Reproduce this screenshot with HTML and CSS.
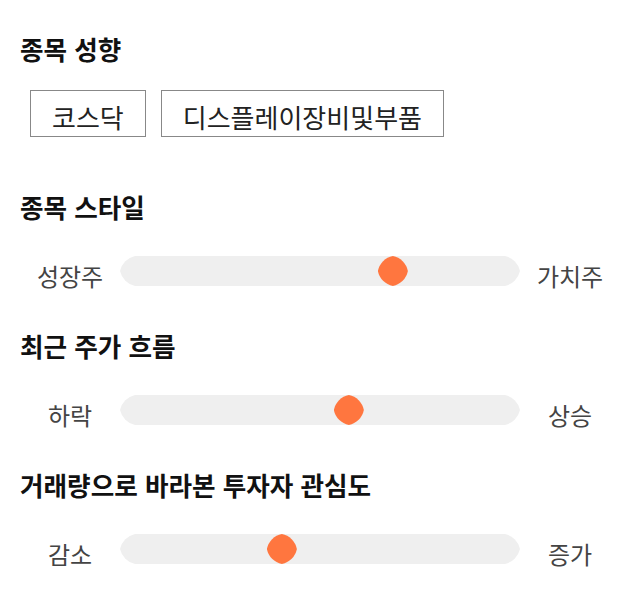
FILE: index.html
```html
<!DOCTYPE html>
<html lang="ko">
<head>
<meta charset="utf-8">
<title>종목 성향</title>
<link rel="stylesheet" href="styles.css">
</head>
<body>
<main class="panel">
  <section class="section section--tags">
    <h2 class="section-title section-title--tight">종목 성향</h2>
    <div class="tags">
      <span class="tag">코스닥</span>
      <span class="tag">디스플레이장비및부품</span>
    </div>
  </section>

  <section class="section">
    <h2 class="section-title">종목 스타일</h2>
    <div class="slider-row">
      <span class="slider-label">성장주</span>
      <div class="track"><span class="thumb" style="--value: 0.697"></span></div>
      <span class="slider-label">가치주</span>
    </div>
  </section>

  <section class="section">
    <h2 class="section-title">최근 주가 흐름</h2>
    <div class="slider-row">
      <span class="slider-label">하락</span>
      <div class="track"><span class="thumb" style="--value: 0.578"></span></div>
      <span class="slider-label">상승</span>
    </div>
  </section>

  <section class="section">
    <h2 class="section-title">거래량으로 바라본 투자자 관심도</h2>
    <div class="slider-row">
      <span class="slider-label">감소</span>
      <div class="track"><span class="thumb" style="--value: 0.397"></span></div>
      <span class="slider-label">증가</span>
    </div>
  </section>
</main>
</body>
</html>
```

FILE: styles.css
```css
html, body {
  margin: 0;
  padding: 0;
  background: #ffffff;
}

body {
  font-family: "Noto Sans CJK KR", "Noto Sans", sans-serif;
  color: #222222;
}

.panel {
  padding: 32px 20px 30px;
}

.section + .section {
  margin-top: 38px;
}

.section--tags + .section {
  margin-top: 53px;
}

.section-title {
  margin: 0 0 32px;
  font-size: 25.6px;
  font-weight: 700;
  line-height: 34px;
  color: #111111;
}

.section-title--tight {
  margin-bottom: 24px;
}

.tags {
  display: flex;
  gap: 15px;
  padding-left: 10px;
}

.tag {
  display: block;
  border: 1px solid #888888;
  padding: 8px 21px 2px;
  font-size: 26px;
  line-height: 35px;
  color: #222222;
}

.slider-row {
  display: flex;
  align-items: flex-start;
}

.slider-label {
  width: 100px;
  padding-top: 5px;
  text-align: center;
  font-size: 24px;
  line-height: 30px;
  color: #444444;
}

.track {
  position: relative;
  width: 400px;
  height: 30px;
  background: #efefef;
  clip-path: path("M15 0 H385 A20 20 0 0 1 400 15 A20 20 0 0 1 385 30 H15 A20 20 0 0 1 0 15 A20 20 0 0 1 15 0 Z");
}

.thumb {
  position: absolute;
  top: 0;
  left: calc((100% - 30px) * var(--value));
  width: 30px;
  height: 30px;
  background: #ff763f;
  clip-path: path("M15 0 A19 19 0 0 1 30 15 A19 19 0 0 1 15 30 A19 19 0 0 1 0 15 A19 19 0 0 1 15 0 Z");
}
```
